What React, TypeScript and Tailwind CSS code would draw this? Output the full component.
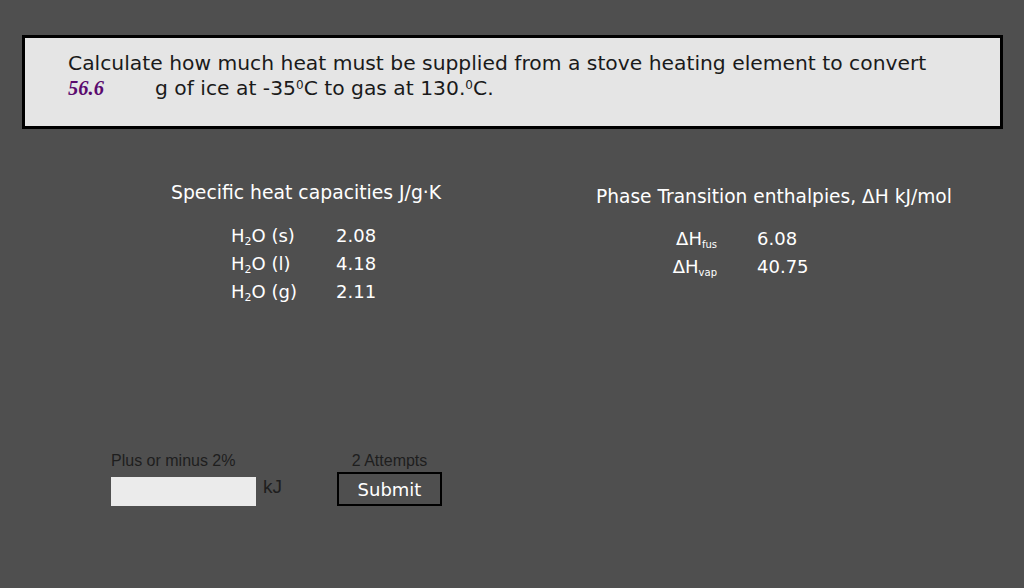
import type { FC } from 'react'

const sans = "font-['DejaVu_Sans',Verdana,sans-serif]"

const heatRows = [
  { phase: 's', value: '2.08' },
  { phase: 'l', value: '4.18' },
  { phase: 'g', value: '2.11' },
]

const enthalpyRows = [
  { sub: 'fus', value: '6.08' },
  { sub: 'vap', value: '40.75' },
]

const App: FC = () => {
  return (
    <div className="h-[588px] w-[1024px] overflow-hidden bg-[#4f4f4f] px-[22px] pt-[35px]">
      {/* question box */}
      <div className={`h-[94px] w-[981px] border-[3px] border-black bg-[#e5e5e5] pl-[43px] pt-[13px] text-[20.3px] leading-[25px] text-[#1a1a1a] ${sans}`}>
        <div>Calculate how much heat must be supplied from a stove heating element to convert</div>
        <div className="flex">
          <span className="w-[87px] font-['Liberation_Serif',serif] text-[20.5px] font-bold italic text-[#5a0a6e]">56.6</span>
          <span>
            g of ice at -35<sup className="text-[12px]">0</sup>C to gas at 130.<sup className="text-[12px]">0</sup>C.
          </span>
        </div>
      </div>

      {/* data tables */}
      <div className={`flex pt-[52px] text-white ${sans}`}>
        <div className="w-[570px] pl-[149px]">
          <div className="text-[18.8px] leading-[24px]">Specific heat capacities J/g·K</div>
          <div className="pl-[60px] pt-[17px] text-[18px] leading-[28px]">
            {heatRows.map((r) => (
              <div key={r.phase} className="flex">
                <span className="w-[105px]">
                  H<sub className="text-[11px]">2</sub>O ({r.phase})
                </span>
                <span>{r.value}</span>
              </div>
            ))}
          </div>
        </div>
        <div className="pt-[4px]">
          <div className="pl-[4px] text-[18.6px] leading-[24px]">Phase Transition enthalpies, ΔH kJ/mol</div>
          <div className="pl-[74px] pt-[16px] text-[18px] leading-[28px]">
            {enthalpyRows.map((r) => (
              <div key={r.sub} className="flex">
                <span className="w-[91px] pr-[40px] text-right">
                  ΔH<sub className="text-[10px]">{r.sub}</sub>
                </span>
                <span>{r.value}</span>
              </div>
            ))}
          </div>
        </div>
      </div>

      {/* answer area */}
      <div className="flex pl-[89px] pt-[146px] font-['Liberation_Sans',Arial,sans-serif]">
        <div>
          <div className="text-[16px] leading-[18px] text-[#1e1e1e]">Plus or minus 2%</div>
          <div className="mt-[7px] flex items-start">
            <input className="h-[29px] w-[145px] bg-[#ebebeb] outline-none" />
            <span className="ml-[7px] text-[19px] leading-[19px] text-[#1e1e1e]">kJ</span>
          </div>
        </div>
        <div className="ml-[55px] flex flex-col items-center">
          <div className="text-[16px] leading-[18px] text-[#1e1e1e]">2 Attempts</div>
          <button className={`mt-[2px] h-[34px] w-[105px] border-2 border-black bg-[#4f4f4f] text-[18px] text-white ${sans}`}>
            Submit
          </button>
        </div>
      </div>
    </div>
  )
}

export default App
